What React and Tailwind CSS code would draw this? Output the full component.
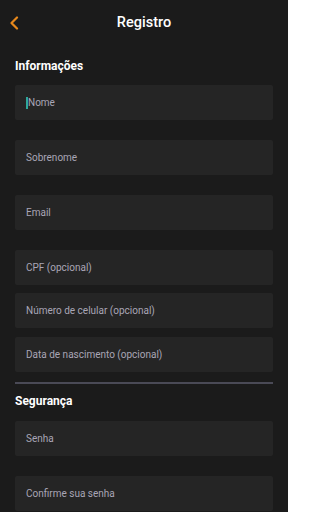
export default function App() {
  return (
    <div className="w-[288px] h-[512px] overflow-hidden bg-[#1b1b1b] font-['Roboto',sans-serif]">
      <header className="relative h-[46px] flex items-center justify-center">
        <button className="absolute left-[8px] top-[16px] w-[12px] h-[14px] flex items-center justify-center">
          <svg width="10" height="14" viewBox="0 0 10 14" fill="none">
            <path d="M8 1.5L2.5 7L8 12.5" stroke="#e8891c" strokeWidth="2.2" strokeLinecap="round" strokeLinejoin="round" />
          </svg>
        </button>
        <h1 className="text-[14.5px] font-medium text-white">Registro</h1>
      </header>

      <div className="px-[15px]">
        <h2 className="mt-[13px] text-[12px] leading-[14px] font-bold text-white">Informações</h2>

        <div className="mt-[12px] flex flex-col">
          <Field label="Nome" cursor />
          <Field label="Sobrenome" className="mt-[20px]" />
          <Field label="Email" className="mt-[20px]" />
          <Field label="CPF (opcional)" className="mt-[20px]" />
          <Field label="Número de celular (opcional)" className="mt-[8px]" />
          <Field label="Data de nascimento (opcional)" className="mt-[9px]" />
        </div>

        <div className="mt-[10px] h-[2px] bg-[#4a4a56]" />

        <h2 className="mt-[10px] text-[12px] leading-[14px] font-bold text-white">Segurança</h2>

        <div className="mt-[13px] flex flex-col">
          <Field label="Senha" />
          <Field label="Confirme sua senha" className="mt-[20px]" />
        </div>
      </div>
    </div>
  );
}

function Field({ label, cursor, className = "" }) {
  return (
    <div className={"h-[35px] rounded-[2px] bg-[#252525] flex items-center pl-[11px] " + className}>
      {cursor && <span className="w-[1.5px] h-[12px] bg-[#2fa89a] mr-[0.5px]" />}
      <span className="text-[10px] text-[#a9a6b6]">{label}</span>
    </div>
  );
}
